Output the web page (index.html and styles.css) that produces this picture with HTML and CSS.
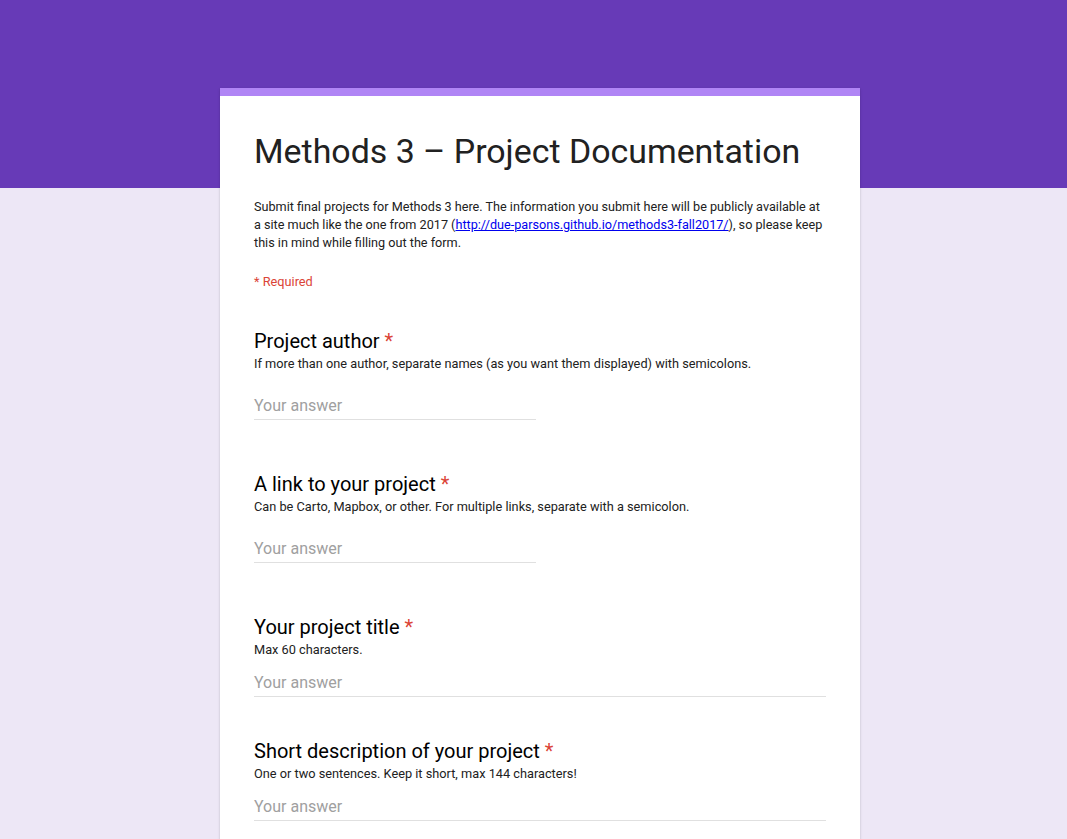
FILE: index.html
```html
<!DOCTYPE html>
<html lang="en">
<head>
<meta charset="utf-8">
<title>Methods 3 – Project Documentation</title>
<link rel="stylesheet" href="styles.css">
</head>
<body>
<div class="page">
  <form class="card">
    <div class="card-top"></div>
    <div class="card-body">
      <h1 class="form-title">Methods 3 – Project Documentation</h1>
      <p class="form-desc">Submit final projects for Methods 3 here. The information you submit here will be publicly available at a site much like the one from 2017 (<a href="#">http://due-parsons.github.io/methods3-fall2017/</a>), so please keep this in mind while filling out the form.</p>
      <p class="required-note">* Required</p>

      <div class="question q-first">
        <div class="q-title">Project author <span class="star">*</span></div>
        <div class="q-help">If more than one author, separate names (as you want them displayed) with semicolons.</div>
        <div class="answer short">Your answer</div>
      </div>

      <div class="question q-gap-lg">
        <div class="q-title">A link to your project <span class="star">*</span></div>
        <div class="q-help">Can be Carto, Mapbox, or other. For multiple links, separate with a semicolon.</div>
        <div class="answer short">Your answer</div>
      </div>

      <div class="question q-gap-lg">
        <div class="q-title">Your project title <span class="star">*</span></div>
        <div class="q-help">Max 60 characters.</div>
        <div class="answer long">Your answer</div>
      </div>

      <div class="question q-gap-md">
        <div class="q-title">Short description of your project <span class="star">*</span></div>
        <div class="q-help">One or two sentences. Keep it short, max 144 characters!</div>
        <div class="answer long">Your answer</div>
      </div>
    </div>
  </form>
</div>
</body>
</html>
```

FILE: styles.css
```css
html, body {
  margin: 0;
  padding: 0;
}

body {
  min-height: 839px;
  background: linear-gradient(#673ab7 0, #673ab7 188px, #ede7f6 188px, #ede7f6 100%);
  font-family: Roboto, "Noto Sans", Arial, sans-serif;
  color: #202124;
}

.page {
  display: flex;
  justify-content: center;
  padding: 88px 0 40px 13px;
}

.card {
  width: 640px;
  background: #fff;
  box-shadow: 0 2px 1px -1px rgba(0,0,0,.2), 0 1px 1px 0 rgba(0,0,0,.14), 0 1px 3px 0 rgba(0,0,0,.12);
}

.card-top {
  height: 8px;
  background: #b085f5;
}

.card-body {
  padding: 36px 33px 40px 34px;
}

.form-title {
  margin: 0;
  font-size: 33.9px;
  line-height: 40px;
  font-weight: 400;
  color: #212121;
}

.form-desc {
  margin: 26px 0 0 0;
  font-size: 12.65px;
  line-height: 18px;
  color: #212121;
}

.form-desc a {
  color: #0000ee;
  text-decoration: underline;
}

.required-note {
  margin: 21px 0 0 0;
  font-size: 12.75px;
  line-height: 18px;
  color: #db4437;
}

.question.q-first { margin-top: 38px; }
.question.q-gap-lg { margin-top: 52px; }
.question.q-gap-md { margin-top: 42px; }

.q-title {
  font-size: 20px;
  line-height: 24px;
  color: #000;
}

.star {
  color: #db4437;
}

.q-help {
  margin-top: 2px;
  font-size: 12.75px;
  line-height: 18px;
  color: #212121;
}

.answer {
  font-size: 16px;
  line-height: 24px;
  color: #a0a0a0;
  border-bottom: 1px solid #e0e0e0;
  padding-bottom: 1px;
}

.answer.short {
  width: 282px;
  margin-top: 21px;
}

.answer.long {
  width: 572px;
  margin-top: 12px;
}
```
